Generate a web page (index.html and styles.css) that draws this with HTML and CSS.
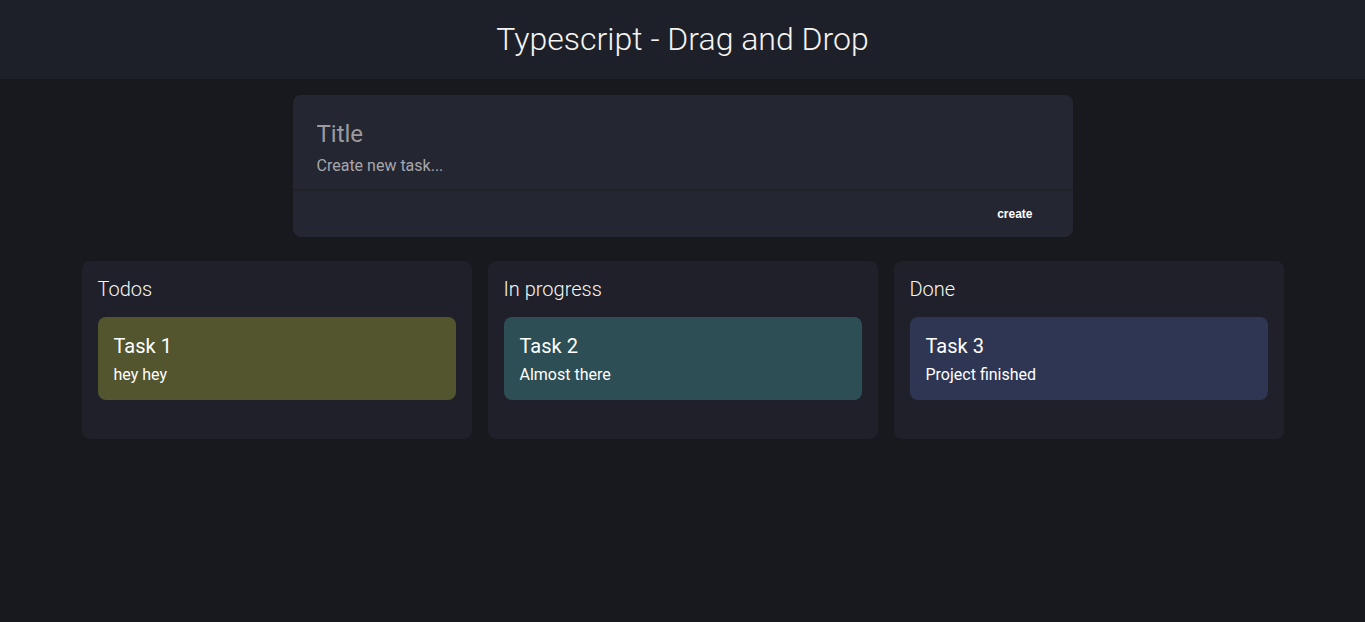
FILE: index.html
```html
<!DOCTYPE html>
<html lang="en">
<head>
<meta charset="utf-8">
<title>Typescript - Drag and Drop</title>
<link rel="stylesheet" href="styles.css">
</head>
<body>
<header class="app-header">
  <h1 class="app-title">Typescript - Drag and Drop</h1>
</header>
<main class="main">
  <form class="new-task">
    <div class="new-task-fields">
      <input class="field-title" type="text" placeholder="Title">
      <input class="field-desc" type="text" placeholder="Create new task...">
    </div>
    <div class="new-task-actions">
      <button class="create-btn" type="button">create</button>
    </div>
  </form>
  <section class="board">
    <div class="column">
      <h2 class="column-title">Todos</h2>
      <div class="task task-todo">
        <h3 class="task-title">Task 1</h3>
        <p class="task-desc">hey hey</p>
      </div>
    </div>
    <div class="column">
      <h2 class="column-title">In progress</h2>
      <div class="task task-progress">
        <h3 class="task-title">Task 2</h3>
        <p class="task-desc">Almost there</p>
      </div>
    </div>
    <div class="column">
      <h2 class="column-title">Done</h2>
      <div class="task task-done">
        <h3 class="task-title">Task 3</h3>
        <p class="task-desc">Project finished</p>
      </div>
    </div>
  </section>
</main>
</body>
</html>
```
FILE: styles.css
```css
* { box-sizing: border-box; }
html, body { margin: 0; padding: 0; }
body {
  background: #18191e;
  color: #ffffff;
  font-family: Roboto, "Liberation Sans", sans-serif;
  min-height: 100vh;
}
.app-header {
  background: #1e2029;
  height: 79px;
  display: flex;
  align-items: center;
  justify-content: center;
  padding-bottom: 2px;
}
.app-title {
  margin: 0;
  font-weight: 300;
  font-size: 32px;
  color: #f4f4f4;
}
.main {
  display: flex;
  flex-direction: column;
  align-items: center;
  padding-top: 16px;
}
.new-task {
  width: 780px;
  background: #242632;
  border-radius: 8px;
  overflow: hidden;
}
.new-task-fields {
  display: flex;
  flex-direction: column;
  padding: 24px 24px 12px;
  border-bottom: 2px solid #202129;
}
.new-task-fields input {
  background: transparent;
  border: none;
  outline: none;
  padding: 0;
  font-family: Roboto, "Liberation Sans", sans-serif;
  color: #fff;
}
.field-title {
  font-size: 24px;
  font-weight: 400;
  height: 30px;
}
.field-title::placeholder { color: #9a9ba0; }
.field-desc {
  font-size: 16px;
  height: 24px;
  margin-top: 4px;
}
.field-desc::placeholder { color: #a7a8ad; }
.new-task-actions {
  display: flex;
  justify-content: flex-end;
  padding: 14px 30px 14px;
}
.create-btn {
  background: transparent;
  border: none;
  color: #fff;
  font-family: "Liberation Sans", Arial, sans-serif;
  font-weight: 700;
  font-size: 12px;
  line-height: 14px;
  padding: 2px 10px;
  cursor: pointer;
}
.board {
  display: flex;
  gap: 16px;
  margin-top: 24px;
}
.column {
  width: 390px;
  height: 178px;
  background: #1f2029;
  border-radius: 8px;
  padding: 16px;
}
.column-title {
  margin: 0 0 16px;
  font-size: 20px;
  font-weight: 300;
  line-height: 24px;
  color: #f6f6f6;
}
.task {
  border-radius: 8px;
  padding: 16px 16px 11px;
  height: 83px;
}
.task-todo { background: #52552e; }
.task-progress { background: #2c4e54; }
.task-done { background: #2e3654; }
.task-title {
  margin: 0;
  font-size: 20px;
  font-weight: 400;
  line-height: 26px;
}
.task-desc {
  margin: 6px 0 0;
  font-size: 16px;
  line-height: 20px;
}
```
